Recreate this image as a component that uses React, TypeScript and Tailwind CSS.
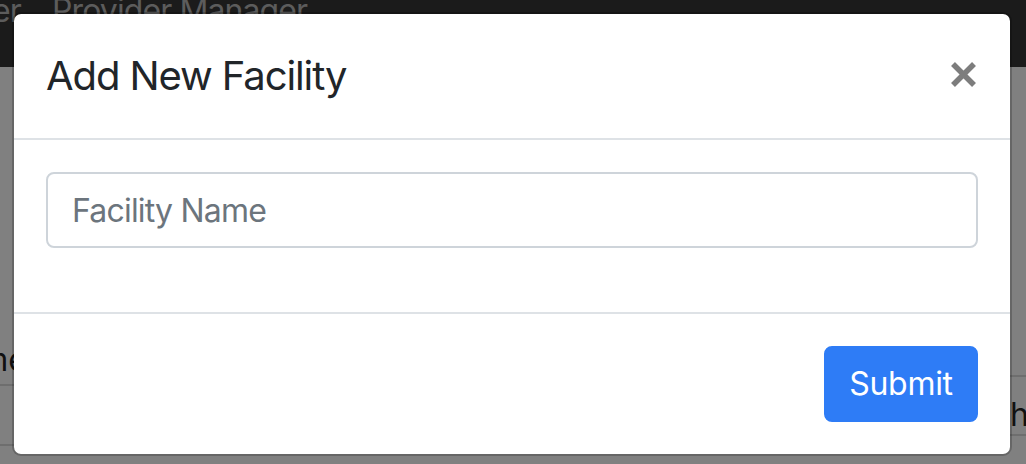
export default function App() {
  return (
    <div className="relative w-[1026px] h-[464px] overflow-hidden bg-[#808080] font-['Inter',sans-serif]">
      {/* background page (dimmed by the modal backdrop) */}
      <div className="flex flex-col h-full">
        <div className="h-[67px] shrink-0 bg-[#1b1b1b] flex items-start text-[32px] leading-[48px] tracking-[-0.9px] text-[#5c5c5c] overflow-hidden">
          <div className="w-[21px] shrink-0 flex justify-end -mt-[13px]">
            <span className="whitespace-nowrap">Facility Manager</span>
          </div>
          <span className="ml-[31px] -mt-[13px] whitespace-nowrap">Provider Manager</span>
        </div>
        <div className="flex-1 flex justify-between text-[32px] leading-[48px] text-[#111]">
          <div className="w-[27px] overflow-hidden flex flex-col">
            <div className="h-[269px] shrink-0" />
            <div className="h-[50px] shrink-0 flex justify-end border-b-2 border-[#6e6e6e]">
              <span className="whitespace-nowrap">Name</span>
            </div>
            <div className="h-[60px] shrink-0 border-b-2 border-[#6e6e6e]" />
          </div>
          <div className="w-[26px] overflow-hidden flex flex-col">
            <div className="h-[310px] shrink-0 border-b-2 border-[#6e6e6e]" />
            <div className="h-[59px] shrink-0 border-b-2 border-[#6e6e6e] pt-[14px] pl-[10px]">
              <span className="whitespace-nowrap">h</span>
            </div>
          </div>
        </div>
      </div>

      {/* modal */}
      <div className="absolute inset-0 pt-[12px] pl-[12px]">
        <div className="w-[1000px] rounded-[9px] border-2 border-black/20 bg-white bg-clip-padding overflow-hidden flex flex-col">
          <div className="flex items-start justify-between p-[32px] border-b-2 border-[#dee2e6]">
            <h5 className="text-[40px] leading-[60px] font-normal tracking-[-1.1px] text-[#212529]">Add New Facility</h5>
            <button className="-m-[32px] ml-auto p-[32px] flex" aria-label="Close">
              <svg width="28" height="48" viewBox="0 0 28 48">
                <line x1="3" y1="18" x2="24" y2="39" stroke="#7d7d7d" strokeWidth="5.5" strokeLinecap="butt" />
                <line x1="24" y1="18" x2="3" y2="39" stroke="#7d7d7d" strokeWidth="5.5" strokeLinecap="butt" />
              </svg>
            </button>
          </div>
          <div className="p-[32px]">
            <div className="mb-[32px]">
              <input
                className="block w-full h-[76px] border-2 border-[#ced4da] rounded-[8px] px-[24px] text-[32px] leading-[48px] tracking-[-0.8px] text-[#495057] bg-white outline-none placeholder:text-[#6c757d]"
                placeholder="Facility Name"
              />
            </div>
          </div>
          <div className="flex justify-end items-center p-[24px] border-t-2 border-[#dee2e6]">
            <button className="m-[8px] h-[76px] w-[154px] rounded-[8px] border-2 border-[#2e7cf6] bg-[#2e7cf6] text-white text-[32px] leading-[48px] tracking-[-0.3px]">
              Submit
            </button>
          </div>
        </div>
      </div>
    </div>
  );
}
